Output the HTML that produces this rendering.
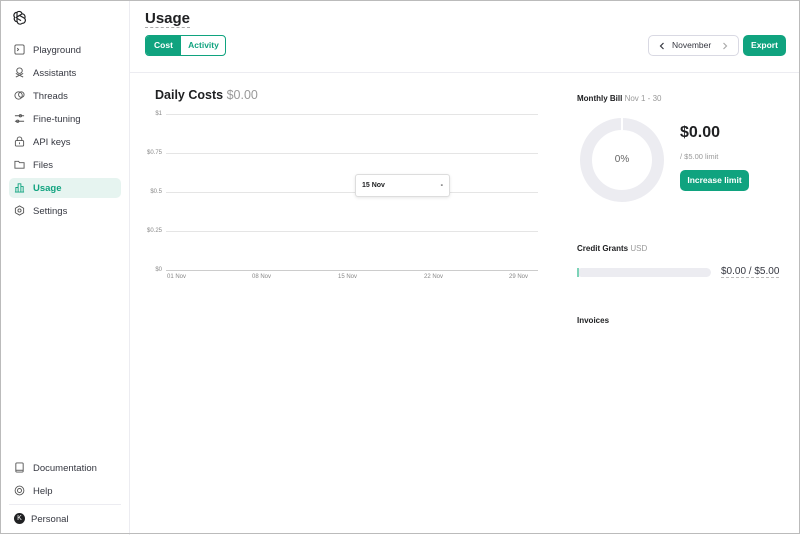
<!DOCTYPE html>
<html><head><style>
*{box-sizing:border-box;margin:0;padding:0}
body{width:800px;height:534px;overflow:hidden;font-family:"Liberation Sans",sans-serif;background:#fff;color:#202123;position:relative}
.frame{position:absolute;left:0;top:0;width:800px;height:534px;border:1px solid #bbb;pointer-events:none;z-index:5}
.w{position:absolute;left:1px;top:1px;width:798px;height:532px}
.sb{position:absolute;left:0;top:0;width:129px;height:534px;border-right:1px solid #ececf1}
.it{position:absolute;left:8px;width:112px;height:20px;font-size:9.5px;color:#353740;display:flex;align-items:center;padding-left:24px}
.it svg{position:absolute;left:5px;top:4px}
.act{background:#e6f4f0;color:#10a37f;font-weight:bold;border-radius:5px}
.hd{position:absolute;left:129px;top:0;right:0;height:72px;border-bottom:1px solid #ececf1}
.g{position:absolute;left:165px;width:372px;height:1px;background:#e5e5e5}
.yl{position:absolute;left:130px;width:35px;text-align:right;padding-right:4px;font-size:6px;color:#888}
.xl{position:absolute;top:273px;font-size:6px;color:#888}
</style></head><body>
<div class="frame"></div>
<div class="w">
<div class="sb">
<svg style="position:absolute;left:10px;top:9px" width="16" height="16" viewBox="0 0 24 24" fill="none" stroke="#202123" stroke-width="1.7"><path d="M9 3.5a4.5 4.5 0 0 1 7.6 2.3 4.5 4.5 0 0 1 3.9 6.7 4.5 4.5 0 0 1-3.6 7.4 4.5 4.5 0 0 1-7.6-2.3 4.5 4.5 0 0 1-3.9-6.7A4.5 4.5 0 0 1 9 3.5z"/><path d="M9 3.5v9l6 3.5M16.6 5.8L9 10.2v7M20.5 12.5l-7.5-4.3-6 3.5"/></svg>
<div class="it" style="top:39px"><svg width="11" height="11" viewBox="0 0 12 12" fill="none" stroke="#555"><rect x="1" y="1" width="10" height="10" rx="1.5"/><path d="M3.5 4.5l1.5 1.5-1.5 1.5"/></svg>Playground</div>
<div class="it" style="top:62px"><svg width="11" height="11" viewBox="0 0 12 12" fill="none" stroke="#555"><circle cx="6" cy="4" r="3"/><path d="M2 11l8-4M10 11L2 7"/></svg>Assistants</div>
<div class="it" style="top:85px"><svg width="11" height="11" viewBox="0 0 12 12" fill="none" stroke="#555"><circle cx="5" cy="6" r="4"/><circle cx="8" cy="5" r="3"/></svg>Threads</div>
<div class="it" style="top:108px"><svg width="11" height="11" viewBox="0 0 12 12" fill="none" stroke="#555"><path d="M1 3h10M1 9h10"/><circle cx="7" cy="3" r="1.3"/><circle cx="4" cy="9" r="1.3"/></svg>Fine-tuning</div>
<div class="it" style="top:131px"><svg width="11" height="11" viewBox="0 0 12 12" fill="none" stroke="#555"><rect x="1.5" y="5" width="9" height="6" rx="1"/><path d="M3.5 5V3.5a2.5 2.5 0 0 1 5 0V5M6 7v2"/></svg>API keys</div>
<div class="it" style="top:154px"><svg width="11" height="11" viewBox="0 0 12 12" fill="none" stroke="#555"><path d="M1 2.5h4l1 1.5h5v6H1z"/></svg>Files</div>
<div class="it act" style="top:177px"><svg width="11" height="11" viewBox="0 0 12 12" fill="none" stroke="#10a37f"><path d="M1 11h10M2 11V6h2.5v5M4.5 11V2h3v9M7.5 11V5H10v6"/></svg>Usage</div>
<div class="it" style="top:200px"><svg width="11" height="11" viewBox="0 0 12 12" fill="none" stroke="#555"><path d="M6 1l4.5 2.5v5L6 11 1.5 8.5v-5z"/><circle cx="6" cy="6" r="1.7"/></svg>Settings</div>
<div class="it" style="top:457px"><svg width="11" height="11" viewBox="0 0 12 12" fill="none" stroke="#555"><rect x="2" y="1" width="8" height="10" rx="1"/><path d="M2 9h8"/></svg>Documentation</div>
<div class="it" style="top:480px"><svg width="11" height="11" viewBox="0 0 12 12" fill="none" stroke="#555"><circle cx="6" cy="6" r="4.8"/><circle cx="6" cy="6" r="2.2"/></svg>Help</div>
<div style="position:absolute;left:8px;top:503px;width:112px;height:1px;background:#ececf1"></div>
<div style="position:absolute;left:13px;top:512px;width:11px;height:11px;border-radius:50%;background:#202123;color:#fff;font-size:7px;text-align:center;line-height:11px">K</div>
<div style="position:absolute;left:30px;top:513px;font-size:9.5px;color:#353740">Personal</div>
</div>
<div class="hd">
<div style="position:absolute;left:15px;top:9px;font-size:15px;font-weight:bold;border-bottom:1px dashed #aaa;line-height:17px">Usage</div>
<div style="position:absolute;left:15px;top:34px;width:81px;height:21px;border:1px solid #10a37f;border-radius:4px;overflow:hidden;font-size:8.5px;font-weight:bold">
<div style="position:absolute;left:0;top:0;width:35px;height:19px;background:#10a37f;color:#fff;text-align:center;line-height:19px">Cost</div>
<div style="position:absolute;left:35px;top:0;width:45px;height:19px;color:#10a37f;text-align:center;line-height:19px">Activity</div></div>
<div style="position:absolute;left:518px;top:34px;width:91px;height:21px;border:1px solid #d9d9e3;border-radius:5px;font-size:8.5px;color:#353740;line-height:19px;padding-left:23px">November
<svg style="position:absolute;left:10px;top:6px" width="6" height="8" viewBox="0 0 6 8" fill="none" stroke="#353740" stroke-width="1.2"><path d="M4.5 1L1.5 4l3 3"/></svg>
<svg style="position:absolute;right:10px;top:6px" width="6" height="8" viewBox="0 0 6 8" fill="none" stroke="#aaa" stroke-width="1.2"><path d="M1.5 1l3 3-3 3"/></svg></div>
<div style="position:absolute;left:613px;top:34px;width:43px;height:21px;background:#10a37f;border-radius:5px;color:#fff;font-size:8.5px;font-weight:bold;text-align:center;line-height:21px">Export</div>
</div>
<div style="position:absolute;left:154px;top:87px;font-size:12.5px;font-weight:bold">Daily Costs <span style="font-weight:normal;color:#999">$0.00</span></div>
<div class="g" style="top:113px"></div><div class="yl" style="top:110px">$1</div>
<div class="g" style="top:152px"></div><div class="yl" style="top:149px">$0.75</div>
<div class="g" style="top:191px"></div><div class="yl" style="top:188px">$0.5</div>
<div class="g" style="top:230px"></div><div class="yl" style="top:227px">$0.25</div>
<div class="g" style="top:269px;background:#ccc"></div><div class="yl" style="top:266px">$0</div>
<div class="xl" style="left:166px">01 Nov</div><div class="xl" style="left:251px">08 Nov</div><div class="xl" style="left:337px">15 Nov</div><div class="xl" style="left:423px">22 Nov</div><div class="xl" style="left:508px">29 Nov</div>
<div style="position:absolute;left:354px;top:173px;width:95px;height:23px;background:#fff;border:1px solid #ddd;border-radius:3px;box-shadow:0 1px 3px rgba(0,0,0,.1);font-size:7px;font-weight:bold;line-height:21px;padding-left:6px">15 Nov<span style="position:absolute;right:6px">-</span></div>
<div style="position:absolute;left:576px;top:93px;font-size:8px;font-weight:bold">Monthly Bill <span style="font-weight:normal;color:#999">Nov 1 - 30</span></div>
<div style="position:absolute;left:579px;top:117px;width:84px;height:84px;border-radius:50%;border:12px solid #ececf1"></div>
<div style="position:absolute;left:620px;top:117px;width:2px;height:12px;background:#fff"></div>
<div style="position:absolute;left:579px;top:153px;width:84px;text-align:center;font-size:10px;color:#666">0%</div>
<div style="position:absolute;left:679px;top:123px;font-size:16px;font-weight:bold">$0.00</div>
<div style="position:absolute;left:679px;top:151px;font-size:7.5px;color:#999">/ $5.00 limit</div>
<div style="position:absolute;left:679px;top:169px;width:69px;height:21px;background:#10a37f;border-radius:5px;color:#fff;font-size:8.5px;font-weight:bold;text-align:center;line-height:21px">Increase limit</div>
<div style="position:absolute;left:576px;top:243px;font-size:8px;font-weight:bold">Credit Grants <span style="font-weight:normal;color:#999">USD</span></div>
<div style="position:absolute;left:576px;top:267px;width:134px;height:9px;border-radius:5px;background:#ececf1"></div>
<div style="position:absolute;left:576px;top:267px;width:2px;height:9px;background:#7dd3b8"></div>
<div style="position:absolute;left:720px;top:265px;font-size:10px;color:#353740;border-bottom:1px dashed #bbb">$0.00 / $5.00</div>
<div style="position:absolute;left:576px;top:315px;font-size:8px;font-weight:bold">Invoices</div>
</div>
</body></html>
